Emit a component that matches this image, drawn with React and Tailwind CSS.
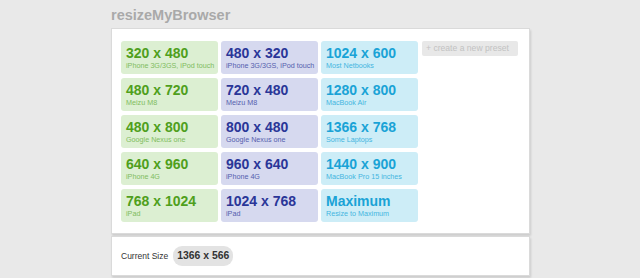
const presets = [
  [
    { size: "320 x 480", name: "iPhone 3G/3GS, iPod touch" },
    { size: "480 x 320", name: "iPhone 3G/3GS, iPod touch" },
    { size: "1024 x 600", name: "Most Netbooks" },
  ],
  [
    { size: "480 x 720", name: "Meizu M8" },
    { size: "720 x 480", name: "Meizu M8" },
    { size: "1280 x 800", name: "MacBook Air" },
  ],
  [
    { size: "480 x 800", name: "Google Nexus one" },
    { size: "800 x 480", name: "Google Nexus one" },
    { size: "1366 x 768", name: "Some Laptops" },
  ],
  [
    { size: "640 x 960", name: "iPhone 4G" },
    { size: "960 x 640", name: "iPhone 4G" },
    { size: "1440 x 900", name: "MacBook Pro 15 inches" },
  ],
  [
    { size: "768 x 1024", name: "iPad" },
    { size: "1024 x 768", name: "iPad" },
    { size: "Maximum", name: "Resize to Maximum" },
  ],
];

const tones = [
  { box: "bg-[#dcefd2]", big: "text-[#4f9f1c]", small: "text-[#80bc60]" },
  { box: "bg-[#d6d9ef]", big: "text-[#2a3698]", small: "text-[#5560ae]" },
  { box: "bg-[#cdedf7]", big: "text-[#1aa3d6]", small: "text-[#44b5e0]" },
];

function Preset({ item, tone }) {
  return (
    <div className={`w-[97px] h-[33px] rounded-[3px] pl-[5px] pt-[5px] ${tone.box}`}>
      <div className={`text-[14px] leading-[15px] font-bold ${tone.big}`}>{item.size}</div>
      <div className={`text-[7.2px] leading-[9px] whitespace-nowrap ${tone.small}`}>{item.name}</div>
    </div>
  );
}

export default function App() {
  return (
    <div className="min-h-[278px] bg-[#e9e9e9] font-['Liberation_Sans',Arial,sans-serif]">
      <div className="ml-[111px] w-[419px]">
        <div className="pt-[7px] h-[28px] text-[14.5px] leading-[17px] font-bold text-[#a9a9a9]">
          resizeMyBrowser
        </div>
        <div className="bg-white border border-[#dadada] shadow-[1px_2px_2px_rgba(0,0,0,0.12)] pl-[9px] pt-[12px] pb-[11px]">
          <div className="flex gap-x-[3px]">
            <div className="flex flex-col gap-y-[4px]">
              {presets.map((row, r) => (
                <div key={r} className="flex gap-x-[3px]">
                  {row.map((item, i) => (
                    <Preset key={i} item={item} tone={tones[i]} />
                  ))}
                </div>
              ))}
            </div>
            <div className="ml-[1px] w-[96px] h-[15px] rounded-[2px] bg-[#e8e8e8] text-[8.6px] leading-[15px] pl-[4px] text-[#c2c2c2] whitespace-nowrap">
              + create a new preset
            </div>
          </div>
        </div>
        <div className="mt-[2px] h-[40px] bg-white border border-[#dadada] shadow-[1px_2px_2px_rgba(0,0,0,0.12)] flex items-center pl-[9px]">
          <span className="text-[8.5px] text-[#333]">Current Size</span>
          <span className="ml-[5px] h-[20px] px-[4px] rounded-[9px] bg-[#e3e3e3] text-[10.4px] leading-[20px] font-bold text-[#333]">
            1366 x 566
          </span>
        </div>
      </div>
    </div>
  );
}
